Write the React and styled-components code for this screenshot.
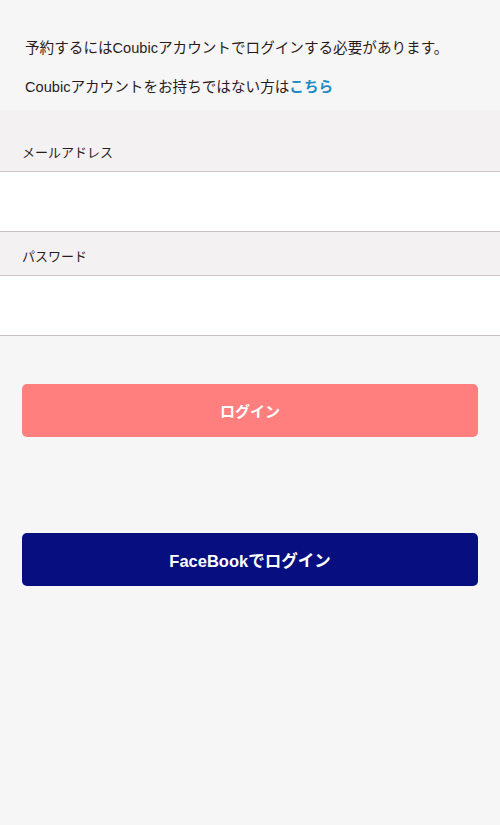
import React from 'react';
import styled, { createGlobalStyle } from 'styled-components';

const GlobalStyle = createGlobalStyle`
  html, body {
    margin: 0;
    padding: 0;
    background: #f7f6f6;
  }
  body {
    font-family: "Liberation Sans", "Noto Sans CJK JP", sans-serif;
    color: #2b1c1c;
  }
`

const Page = styled.div`
  width: 100%;
  min-height: 825px;
  background: #f7f6f6;
`
const Intro = styled.div`
  height: 110px;
  box-sizing: border-box;
  padding: 38px 25px 0;
`
const Text = styled.p`
  margin: 0 0 19px;
  font-size: 14.6px;
  line-height: 20px;
`
const Link = styled.a`
  color: #1c8dc4;
  font-weight: bold;
  text-decoration: none;
`
const Form = styled.form`
  display: flex;
  flex-direction: column;
  background: #f3f1f1;
`
const Label = styled.label`
  display: flex;
  align-items: flex-end;
  box-sizing: border-box;
  height: ${props => props.tall ? '61' : '43'}px;
  padding: 0 22px 9px;
  font-size: 13px;
  line-height: 18px;
`
const Field = styled.input`
  display: block;
  width: 100%;
  box-sizing: border-box;
  height: 61px;
  margin: 0;
  padding: 0 22px;
  border: none;
  border-top: 1px solid #cdc2c3;
  border-bottom: 1px solid #cdc2c3;
  background: #fff;
  font-size: 15px;
  outline: none;
`
const Actions = styled.div`
  display: flex;
  flex-direction: column;
  gap: 96px;
  padding: 48px 22px 0;
`
const Button = styled.button`
  display: flex;
  align-items: center;
  justify-content: center;
  height: 53px;
  width: 100%;
  border: none;
  border-radius: 5px;
  background: ${props => props.fb ? '#070f80' : '#ff7f7f'};
  color: #fff;
  font-family: "Liberation Sans", "Noto Sans CJK JP", sans-serif;
  font-weight: bold;
  font-size: ${props => props.fb ? '16.5' : '15'}px;
  cursor: pointer;
`

export default function App() {
  return (
    <Page>
      <GlobalStyle />
      <Intro>
        <Text>予約するにはCoubicアカウントでログインする必要があります。</Text>
        <Text>Coubicアカウントをお持ちではない方は<Link href="#">こちら</Link></Text>
      </Intro>
      <Form onSubmit={e => e.preventDefault()}>
        <Label tall htmlFor="email">メールアドレス</Label>
        <Field id="email" type="email" />
        <Label htmlFor="password">パスワード</Label>
        <Field id="password" type="password" />
      </Form>
      <Actions>
        <Button type="button">ログイン</Button>
        <Button type="button" fb>FaceBookでログイン</Button>
      </Actions>
    </Page>
  );
}
